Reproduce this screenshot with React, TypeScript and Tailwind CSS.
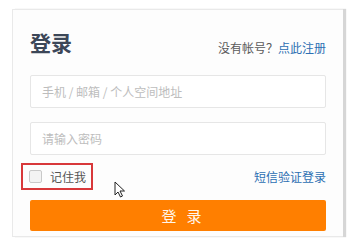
import React from 'react';

const font = { fontFamily: '"Noto Sans CJK SC", "Noto Sans", sans-serif' };

const Cursor: React.FC = () => (
  <svg
    className="absolute left-[114px] top-[181px]"
    width="12"
    height="17"
    viewBox="0 0 12 17"
  >
    <path
      d="M1 1 L1 14 L4 11 L6.5 16 L8.5 15 L6 10 L10.5 10 Z"
      fill="#ffffff"
      stroke="#222222"
      strokeWidth="1"
      strokeLinejoin="round"
    />
  </svg>
);

export default function App() {
  return (
    <div className="relative w-[353px] h-[244px] bg-white overflow-hidden" style={font}>
      {/* login card */}
      <div className="ml-[12px] mt-[9px] w-[331px] h-[228px] bg-[#fdfdfd] border-t border-b border-l border-[#e9e9e9] shadow-[3px_0_1px_rgba(0,0,0,0.16)] px-[17px] pt-[20px]">
        <div className="flex justify-between items-end h-[24px]">
          <h1 className="text-[21px] leading-[24px] font-bold text-[#3c4758]">登录</h1>
          <div className="text-[12px] leading-[12px] text-[#5a5a5a]">
            没有帐号？<a className="text-[#2c6fb2]">点此注册</a>
          </div>
        </div>

        <input
          className="mt-[21px] block w-full h-[33px] border border-[#e6e6e6] rounded-[2px] bg-white pl-[11px] text-[12px] outline-none placeholder:text-[#bdbdbd]"
          placeholder="手机 / 邮箱 / 个人空间地址"
        />
        <input
          type="password"
          className="mt-[14px] block w-full h-[33px] border border-[#e6e6e6] rounded-[2px] bg-white pl-[11px] text-[12px] outline-none placeholder:text-[#bdbdbd]"
          placeholder="请输入密码"
        />

        <div className="mt-[8px] flex items-center justify-between h-[27px]">
          <label className="-ml-[9px] w-[72px] h-[27px] border-2 border-[#d8383a] flex items-center pl-[6px] gap-[8px]">
            <span className="w-[13px] h-[13px] border border-[#c9c9c9] bg-[#f3f3f3] rounded-[2px]" />
            <span className="text-[12px] leading-none text-[#555555]">记住我</span>
          </label>
          <a className="text-[12px] leading-none text-[#2c6fb2]">短信验证登录</a>
        </div>

        <button className="mt-[10px] w-full h-[31px] bg-[#ff7f00] rounded-[2px] flex items-center justify-center">
          <span className="pl-[17px] text-[15px] leading-none tracking-[10px] text-[#fff6ec]">登录</span>
        </button>
      </div>

      <Cursor />
    </div>
  );
}
